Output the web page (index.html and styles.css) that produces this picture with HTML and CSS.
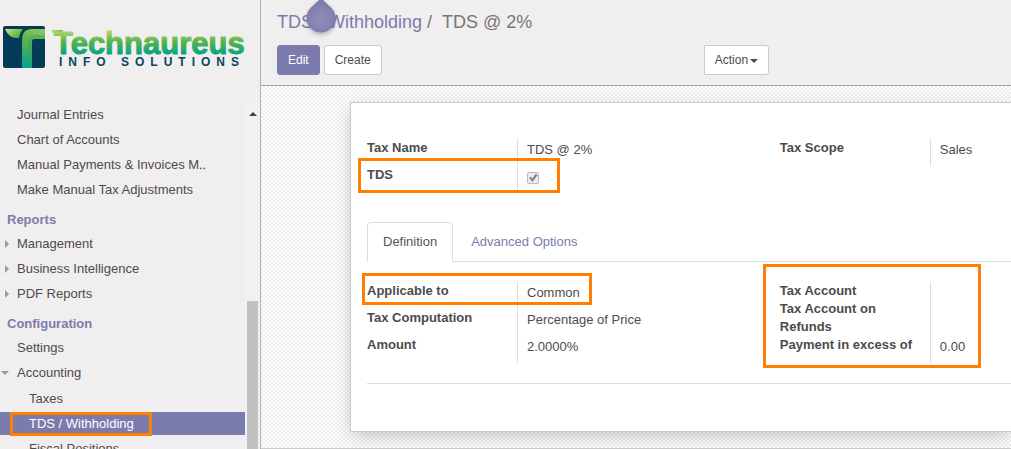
FILE: index.html
```html
<!DOCTYPE html>
<html lang="en">
<head>
<meta charset="utf-8">
<title>TDS @ 2%</title>
<link rel="stylesheet" href="styles.css">
</head>
<body>
<div class="app">
  <aside class="sidebar">
    <div class="brand">
      <svg class="brand-mark" viewBox="0 0 42 42" aria-hidden="true">
        <defs>
          <linearGradient id="stem" x1="0.6" y1="0" x2="0.3" y2="1">
            <stop offset="0" stop-color="#8cc455"/>
            <stop offset="0.45" stop-color="#52b152"/>
            <stop offset="1" stop-color="#06a592"/>
          </linearGradient>
          <linearGradient id="leaf" x1="0" y1="0" x2="1" y2="0.6">
            <stop offset="0" stop-color="#d3e08c"/>
            <stop offset="0.6" stop-color="#7fc04f"/>
            <stop offset="1" stop-color="#43ad4b"/>
          </linearGradient>
        </defs>
        <rect width="42" height="42" rx="2" fill="#043c57"/>
        <path d="M2 3H20Q17 6 16 12Q6 13 2 3Z" fill="url(#leaf)"/>
        <path d="M42 3V13H31Q29 13 29 16V42H19V14Q19 3 29 3Z" fill="url(#stem)"/>
        <path d="M25 42V17Q25 9 32 9H42V13H31Q29 13 29 16V42Z" fill="#2f9f55" opacity="0.35"/>
      </svg>
      <svg class="brand-name" viewBox="0 0 196 42" role="img" aria-label="Technaureus Info Solutions">
        <defs>
          <linearGradient id="word" gradientUnits="userSpaceOnUse" x1="0" y1="5" x2="0" y2="28">
            <stop offset="0" stop-color="#b4d66c"/>
            <stop offset="0.45" stop-color="#57b54c"/>
            <stop offset="1" stop-color="#08a284"/>
          </linearGradient>
        </defs>
        <path d="M0 4H12L10 9Q3 10 0 4Z" fill="url(#leaf)"/>
        <text class="wordmark" x="3" y="28">Technaureus</text>
        <text class="tagline" x="8" y="40">INFO SOLUTIONS</text>
      </svg>
    </div>
    <div class="menu-area">
      <nav class="menu">
        <ul class="menu-list">
          <li><a class="item" href="#">Journal Entries</a></li>
          <li><a class="item" href="#">Chart of Accounts</a></li>
          <li><a class="item" href="#">Manual Payments &amp; Invoices M‥</a></li>
          <li><a class="item" href="#">Make Manual Tax Adjustments</a></li>
        </ul>
        <h2 class="menu-title">Reports</h2>
        <ul class="menu-list">
          <li><a class="item closed" href="#">Management</a></li>
          <li><a class="item closed" href="#">Business Intelligence</a></li>
          <li><a class="item closed" href="#">PDF Reports</a></li>
        </ul>
        <h2 class="menu-title">Configuration</h2>
        <ul class="menu-list">
          <li><a class="item" href="#">Settings</a></li>
          <li><a class="item opened" href="#">Accounting</a>
            <ul class="menu-list submenu">
              <li><a class="item" href="#">Taxes</a></li>
              <li><a class="item active" href="#">TDS / Withholding<span class="mark mark-menu"></span></a></li>
              <li><a class="item" href="#">Fiscal Positions</a></li>
            </ul>
          </li>
        </ul>
      </nav>
      <div class="scrollbar" aria-hidden="true">
        <span class="scroll-up"></span>
        <span class="scroll-thumb"></span>
      </div>
    </div>
  </aside>

  <main class="main">
    <header class="control-panel">
      <h1 class="breadcrumb"><a href="#">TDS / Withholding</a><span class="slash">/</span><span>TDS @ 2%</span></h1>
      <svg class="drop" viewBox="0 0 34 40" aria-hidden="true">
        <defs>
          <radialGradient id="dropfill" cx="0.5" cy="0.58" r="0.55">
            <stop offset="0" stop-color="#908fba"/>
            <stop offset="1" stop-color="#7c7bad"/>
          </radialGradient>
        </defs>
        <path d="M15 0H19L27.300 7.700A14.500 14.500 0 1 1 6.700 7.700Z" fill="url(#dropfill)"/>
      </svg>
      <div class="toolbar">
        <div class="buttons">
          <button class="btn primary" type="button">Edit</button>
          <button class="btn" type="button">Create</button>
        </div>
        <div class="buttons">
          <button class="btn action" type="button">Action<span class="caret"></span></button>
        </div>
      </div>
    </header>

    <section class="form-view">
      <div class="sheet">
        <div class="groups">
          <div class="group">
            <div class="row"><span class="label">Tax Name</span><span class="value">TDS @ 2%</span></div>
            <div class="row"><label class="label" for="tds">TDS</label><span class="value"><input class="check" id="tds" type="checkbox" checked disabled></span></div>
            <span class="mark mark-tds"></span>
          </div>
          <div class="group">
            <div class="row"><span class="label">Tax Scope</span><span class="value">Sales</span></div>
          </div>
        </div>

        <div class="tabs">
          <a class="tab current" href="#">Definition</a>
          <a class="tab" href="#">Advanced Options</a>
        </div>

        <div class="groups definition">
          <div class="group">
            <div class="row"><span class="label">Applicable to</span><span class="value">Common</span></div>
            <div class="row"><span class="label">Tax Computation</span><span class="value">Percentage of Price</span></div>
            <div class="row"><span class="label">Amount</span><span class="value">2.0000%</span></div>
            <span class="mark mark-applicable"></span>
          </div>
          <div class="group">
            <div class="row empty"><span class="label">Tax Account</span><span class="value"></span></div>
            <div class="row empty"><span class="label">Tax Account on Refunds</span><span class="value"></span></div>
            <div class="row"><span class="label">Payment in excess of</span><span class="value">0.00</span></div>
            <span class="mark mark-accounts"></span>
          </div>
        </div>
      </div>
    </section>
  </main>
</div>
</body>
</html>
```
FILE: styles.css
```css
* { box-sizing: border-box; }

body {
  margin: 0;
  font: 13px/18px "Liberation Sans", Arial, sans-serif;
  color: #4c4c4c;
  background: #fff;
}

a { color: #7c7bad; text-decoration: none; }
ul { list-style: none; margin: 0; padding: 0; }

.app {
  display: flex;
  height: 100vh;
  overflow: hidden;
}

/* Sidebar */
.sidebar {
  display: flex;
  flex-direction: column;
  flex: 0 0 261px;
  background: #f0eeee;
  border-right: 1px solid #afafb6;
}

.brand {
  display: flex;
  gap: 6px;
  padding: 26px 0 35px 3px;
}
.brand-mark { width: 42px; height: 42px; }
.brand-name { width: 196px; height: 42px; overflow: visible; }
.wordmark {
  font: bold 31px "Liberation Sans", Arial, sans-serif;
  fill: url(#word);
  stroke: url(#word);
  stroke-width: 1px;
  stroke-linejoin: round;
}
.tagline {
  font: bold 12px "Liberation Sans", Arial, sans-serif;
  letter-spacing: 6px;
  fill: #0b4560;
}

.menu-area { display: flex; flex: 1; min-height: 0; }
.menu { flex: 1; overflow: hidden; }
.item {
  display: block;
  position: relative;
  margin-bottom: 2px;
  padding-left: 17px;
  line-height: 23px;
  color: #4c4c4c;
}
.menu-title {
  margin: 0 0 2px;
  padding: 7px 0 0 7px;
  font-size: 13px;
  line-height: 20px;
  color: #7c7bad;
}
.submenu { padding-top: 1px; }
.submenu .item { padding-left: 29px; }
.submenu .active { color: #fff; background: #7c7bad; }
.closed::before,
.opened::before {
  content: "";
  position: absolute;
  border: 4px solid transparent;
}
.closed::before { left: 5px; top: 8px; border-left-color: #9a9a9a; border-right-width: 0; }
.opened::before { left: 1px; top: 10px; border-top-color: #9a9a9a; border-bottom-width: 0; }

.scrollbar {
  display: flex;
  flex-direction: column;
  align-items: center;
  justify-content: space-between;
  width: 15px;
  padding-top: 9px;
  background: #f1f1f1;
}
.scroll-up {
  border: 4px solid transparent;
  border-top-width: 0;
  border-bottom-color: #404040;
}
.scroll-thumb { width: 11px; height: 44%; background: #c1c1c1; }

/* Control panel */
.main {
  display: flex;
  flex-direction: column;
  flex: 1;
  min-width: 0;
}
.control-panel {
  position: relative;
  padding: 12px 0 10px 16px;
  background: #f0eeee;
  border-bottom: 1px solid #a3a3a3;
}
.breadcrumb {
  margin: 0 0 13px;
  font-size: 18px;
  font-weight: normal;
  line-height: 20px;
  color: #777;
}
.slash { padding: 0 10px 0 5px; }
.drop {
  position: absolute;
  left: 43px;
  top: 0;
  width: 34px;
  height: 40px;
  filter: drop-shadow(0 2px 2px rgba(0, 0, 0, 0.25));
}
.toolbar { display: grid; grid-template-columns: 25fr 18fr; }
.buttons { display: flex; gap: 4px; }
.btn {
  height: 30px;
  padding: 0 10px;
  font: 12px/18px "Liberation Sans", Arial, sans-serif;
  color: #4c4c4c;
  background: #fff;
  border: 1px solid #ccc;
  border-radius: 3px;
}
.primary { color: #fff; background: #7c7bad; border-color: #7c7bad; }
.action { border-radius: 0 3px 3px 0; }
.caret {
  display: inline-block;
  margin-left: 2px;
  vertical-align: middle;
  border: 4px solid transparent;
  border-top-color: #4c4c4c;
  border-bottom-width: 0;
}

/* Form */
.form-view {
  flex: 1;
  padding: 16px 0 16px 89px;
  border-bottom: 1px solid #ccc;
  background: repeating-conic-gradient(#ececec 0 25%, #fff 0 50%) 0 0 / 4px 4px;
}
.sheet {
  padding: 36px 0 47px 16px;
  background: #fff;
  border: 1px solid #c8c8d3;
  border-right: 0;
  box-shadow: 0 5px 16px -2px rgba(0, 0, 0, 0.22);
}
.groups { display: grid; grid-template-columns: 25fr 14fr; }
.group { position: relative; }
.row { display: grid; grid-template-columns: 150px 1fr; min-height: 27px; }
.empty { min-height: 18px; }
.label { font-weight: bold; padding-right: 15px; }
.value { padding: 2px 0 0 9px; border-left: 1px solid #ddd; }
.check {
  appearance: none;
  display: block;
  width: 12px;
  height: 12px;
  margin: 4px 0 0;
  border: 1px solid #bbb;
  border-radius: 2px;
  background: #ececec;
}
.check::after {
  content: "";
  display: block;
  width: 10px;
  height: 10px;
  background: #858585;
  clip-path: polygon(10% 50%, 28% 38%, 42% 55%, 78% 8%, 95% 22%, 45% 90%);
}

.tabs {
  display: flex;
  gap: 2px;
  margin-top: 29px;
  border-bottom: 1px solid #ddd;
}
.tab {
  margin-bottom: -1px;
  padding: 10px 15px;
  border: 1px solid transparent;
  border-radius: 4px 4px 0 0;
}
.current { color: #555; background: #fff; border-color: #ddd #ddd #fff; }
.definition { padding: 20px 0; border-bottom: 1px solid #ddd; }

/* Highlight frames */
.mark { position: absolute; border: 3px solid #ff7f00; pointer-events: none; }
.mark-menu { left: 10px; top: 0; width: 142px; height: 24px; }
.mark-tds { left: -9px; top: 19px; width: 202px; height: 35px; }
.mark-applicable { left: -5px; top: -9px; width: 230px; height: 32px; }
.mark-accounts { left: -17px; top: -18px; width: 218px; height: 104px; }
```
